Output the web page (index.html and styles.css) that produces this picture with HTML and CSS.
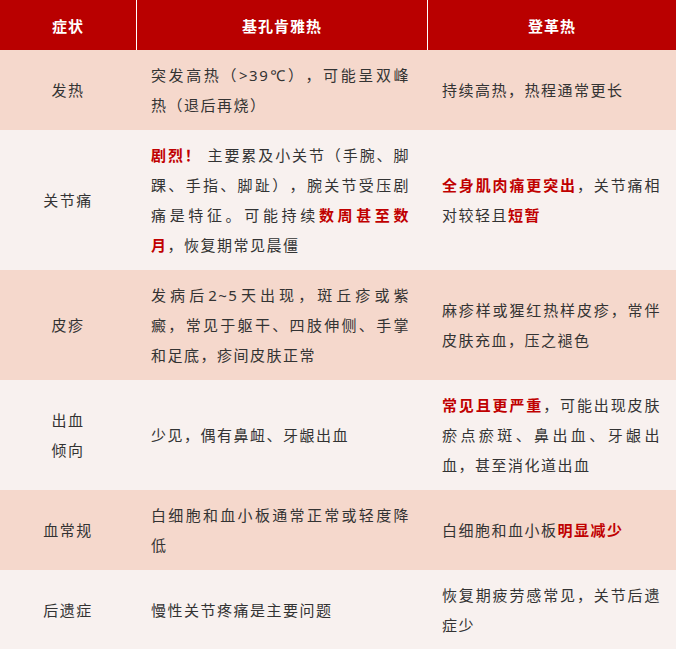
FILE: index.html
```html
<!DOCTYPE html>
<html lang="zh-CN">
<head>
<meta charset="utf-8">
<title>基孔肯雅热与登革热对比</title>
<link rel="stylesheet" href="styles.css">
</head>
<body>
<table class="cmp">
  <colgroup>
    <col class="c1">
    <col class="c2">
    <col class="c3">
  </colgroup>
  <thead>
    <tr>
      <th>症状</th>
      <th class="sep">基孔肯雅热</th>
      <th class="sep">登革热</th>
    </tr>
  </thead>
  <tbody>
    <tr class="peach">
      <td class="name">发热</td>
      <td class="txt">突发高热（&gt;39℃），可能呈双峰热（退后再烧）</td>
      <td class="txt">持续高热，热程通常更长</td>
    </tr>
    <tr class="light">
      <td class="name">关节痛</td>
      <td class="txt"><b>剧烈！</b> 主要累及小关节（手腕、脚踝、手指、脚趾），腕关节受压剧痛是特征。可能持续<b>数周甚至数月</b>，恢复期常见晨僵</td>
      <td class="txt"><b>全身肌肉痛更突出</b>，关节痛相对较轻且<b>短暂</b></td>
    </tr>
    <tr class="peach">
      <td class="name">皮疹</td>
      <td class="txt">发病后2~5天出现，斑丘疹或紫癜，常见于躯干、四肢伸侧、手掌和足底，疹间皮肤正常</td>
      <td class="txt">麻疹样或猩红热样皮疹，常伴皮肤充血，压之褪色</td>
    </tr>
    <tr class="light">
      <td class="name">出血<br>倾向</td>
      <td class="txt">少见，偶有鼻衄、牙龈出血</td>
      <td class="txt"><b>常见且更严重</b>，可能出现皮肤瘀点瘀斑、鼻出血、牙龈出血，甚至消化道出血</td>
    </tr>
    <tr class="peach">
      <td class="name">血常规</td>
      <td class="txt">白细胞和血小板通常正常或轻度降低</td>
      <td class="txt">白细胞和血小板<b>明显减少</b></td>
    </tr>
    <tr class="light">
      <td class="name">后遗症</td>
      <td class="txt">慢性关节疼痛是主要问题</td>
      <td class="txt">恢复期疲劳感常见，关节后遗症少</td>
    </tr>
  </tbody>
</table>
</body>
</html>
```
FILE: styles.css
```css
html, body {
  margin: 0;
  padding: 0;
  background: #f8f1ef;
}

body {
  font-family: "Noto Sans", "Noto Sans CJK SC", sans-serif;
  font-size: 15px;
  color: #333333;
  text-spacing-trim: space-all;
}

.cmp {
  width: 676px;
  table-layout: fixed;
  border-collapse: separate;
  border-spacing: 0;
}

.c1 { width: 136px; }
.c2 { width: 291px; }
.c3 { width: 249px; }

.cmp th {
  height: 50px;
  padding: 0;
  box-sizing: border-box;
  background: #b90000;
  color: #ffffff;
  font-weight: bold;
  font-size: 15px;
  letter-spacing: 1px;
  text-align: center;
  vertical-align: middle;
}

.cmp th.sep {
  border-left: 1px solid #ffffff;
}

.cmp td {
  padding: 10px 15px;
  line-height: 30px;
  letter-spacing: 1.5px;
  vertical-align: middle;
  text-spacing-trim: space-all;
}

.cmp td.name {
  padding: 10px 0;
  text-align: center;
}

.cmp td.txt {
  text-align: justify;
}

.cmp td.txt:nth-child(2) {
  padding-right: 17px;
}

.peach td { background: #f5d8cc; }
.light td { background: #f8f1ef; }

.cmp b {
  color: #c00000;
  font-weight: bold;
}
```
